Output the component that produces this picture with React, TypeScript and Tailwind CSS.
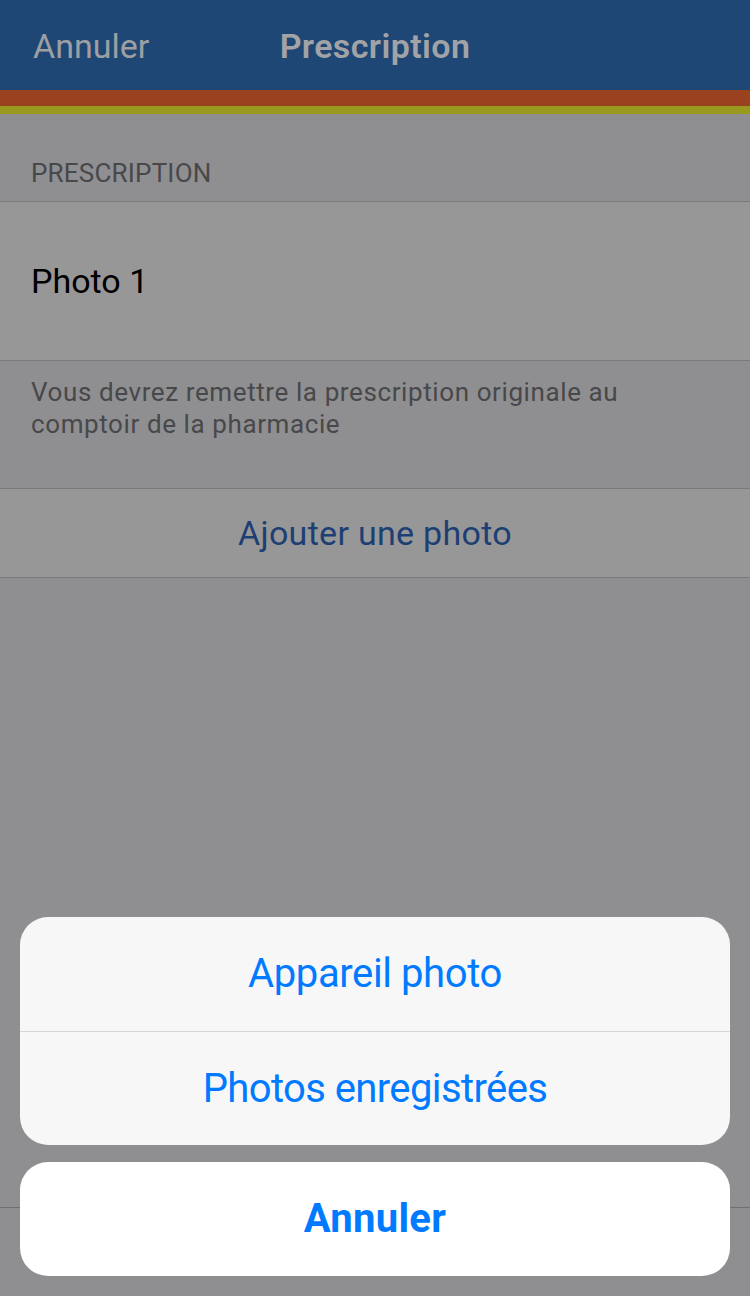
const font = { fontFamily: "Roboto, 'Liberation Sans', sans-serif" };

const App = () => {
  return (
    <main
      className="relative h-[1296px] w-[750px] overflow-hidden bg-[#8f8f91] flex flex-col"
      style={font}
    >
      {/* Nav bar */}
      <header className="h-[90px] bg-[#1f4775] flex items-center relative shrink-0 pt-[2px]">
        <span className="ml-[33px] text-[34px] text-[#9d9fa3]">Annuler</span>
        <span className="absolute left-0 right-0 text-center text-[34px] font-semibold text-[#a2a3a6] tracking-[0.4px]">
          Prescription
        </span>
      </header>
      <div className="h-[16px] bg-[#9a411f] shrink-0" />
      <div className="h-[8px] bg-[#9a991f] shrink-0" />

      {/* Section header */}
      <div className="h-[87px] flex items-end pb-[8px] px-[31px] text-[26px] text-[#48484a] tracking-[0.2px]">
        PRESCRIPTION
      </div>

      <div className="h-[160px] bg-[#979797] border-y border-[#7a7a7c] flex items-center px-[31px] text-[34px] text-black">
        Photo 1
      </div>

      {/* Footer */}
      <div className="h-[127px] px-[31px] pt-[15px] text-[26px] leading-[32px] text-[#48484a] tracking-[0.6px]">
        Vous devrez remettre la prescription originale au
        <br />
        comptoir de la pharmacie
      </div>

      <div className="h-[90px] bg-[#979797] border-y border-[#7a7a7c] flex items-center justify-center text-[34px] text-[#1d3f74] tracking-[0.3px]">
        Ajouter une photo
      </div>

      <div className="flex-1" />
      {/* Toolbar under the sheet */}
      <div className="h-[89px] border-t border-[#707072] shrink-0" />

      {/* Action sheet */}
      <div className="absolute left-[20px] right-[20px] bottom-[20px] flex flex-col gap-[17px]">
        <div className="bg-[#f7f7f7] rounded-[28px] overflow-hidden flex flex-col">
          <button className="h-[114px] flex items-center justify-center text-[40px] text-[#007aff] tracking-[-0.4px]">
            Appareil photo
          </button>
          <div className="h-px bg-[#d6d6d8]" />
          <button className="h-[113px] flex items-center justify-center text-[40px] text-[#007aff] tracking-[-0.6px]">
            Photos enregistrées
          </button>
        </div>
        <button className="h-[114px] bg-white rounded-[28px] flex items-center justify-center text-[40px] font-bold text-[#007aff] tracking-[0.3px]">
          Annuler
        </button>
      </div>
    </main>
  );
};

export default App;
